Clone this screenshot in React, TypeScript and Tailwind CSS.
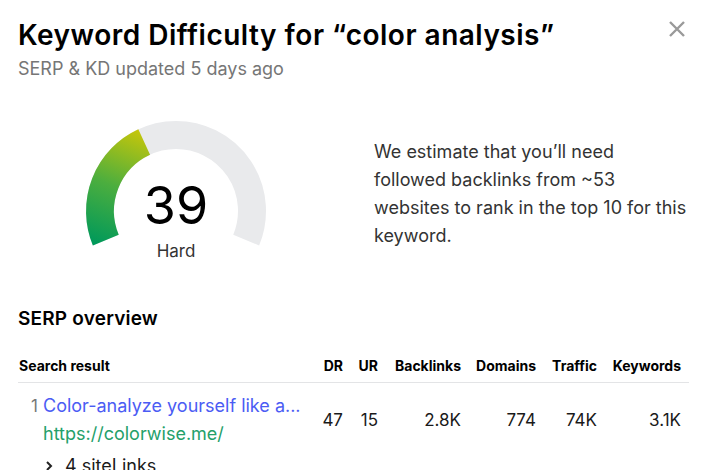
import React from "react";

function Gauge() {
  return (
    <div className="relative w-[200px] h-[145px]">
      <svg width="200" height="145" viewBox="0 0 200 145" className="absolute left-0 top-0">
        <defs>
          <linearGradient id="kdg" gradientUnits="userSpaceOnUse" x1="25" y1="135" x2="70" y2="22">
            <stop offset="0" stopColor="#00995a" />
            <stop offset="0.5" stopColor="#4cae3e" />
            <stop offset="1" stopColor="#c6c60a" />
          </linearGradient>
        </defs>
        <path d="M29.8 129.1 A76 76 0 1 1 170.2 129.1" fill="none" stroke="#e9eaec" strokeWidth="28" />
        <path d="M29.8 129.1 A76 76 0 0 1 68.2 31.0" fill="none" stroke="url(#kdg)" strokeWidth="28" />
      </svg>
      <div className="absolute left-0 right-0 top-[65px] text-center text-[52px] leading-[60px] text-black">
        39
      </div>
      <div className="absolute left-0 right-0 top-[128px] text-center text-[17px] leading-[24px] text-[#333]">
        Hard
      </div>
    </div>
  );
}

const headers = [
  { t: "DR", w: "w-[36px]" },
  { t: "UR", w: "w-[35px]" },
  { t: "Backlinks", w: "w-[83px]" },
  { t: "Domains", w: "w-[75px]" },
  { t: "Traffic", w: "w-[61px]" },
  { t: "Keywords", w: "w-[84px]" },
];
const vals = ["47", "15", "2.8K", "774", "74K", "3.1K"];

export default function App() {
  return (
    <div className="w-[725px] h-[470px] overflow-hidden bg-white text-[#1a1a1a]" style={{ fontFamily: "Inter, sans-serif" }}>
      <div className="pl-[18px] pr-[36px] pt-[16px]">
        <div className="flex items-start justify-between">
          <h1 className="text-[28px] leading-[38px] font-semibold tracking-[0.5px] text-black">
            Keyword Difficulty for “color analysis”
          </h1>
          <svg width="20" height="20" viewBox="0 0 20 20" className="mt-[3px] mr-[2px]">
            <path d="M3 3 L17 17 M17 3 L3 17" stroke="#9a9a9a" strokeWidth="2.4" />
          </svg>
        </div>
        <div className="mt-[3px] text-[18px] leading-[24px] text-[#767676]">
          SERP &amp; KD updated 5 days ago
        </div>
      </div>

      <div className="flex pt-[30px]">
        <div className="ml-[76px]">
          <Gauge />
        </div>
        <div className="ml-[98px] mt-[27px] whitespace-nowrap text-[18px] leading-[28px] text-[#333]">
          We estimate that you’ll need
          <br />
          followed backlinks from ~53
          <br />
          websites to rank in the top 10 for this
          <br />
          keyword.
        </div>
      </div>

      <div className="px-[18px] pt-[50px]">
        <div className="text-[19px] leading-[26px] font-semibold tracking-[0.2px] text-black">SERP overview</div>
        <div className="mt-[25px] w-[671px]">
          <div className="flex items-end border-b border-[#e3e4e6] pb-[7px] text-[14px] leading-[18px] font-bold text-black">
            <div className="flex-1 pl-[1px]">Search result</div>
            {headers.map((h) => (
              <div key={h.t} className={`${h.w} text-right`}>{h.t}</div>
            ))}
            <div className="w-[8px]" />
          </div>
          <div className="flex items-center pt-[9px]">
            <div className="flex-1 flex">
              <div className="w-[25px] text-right pr-[5px] text-[17px] leading-[28px] text-[#777]">1</div>
              <div>
                <div className="text-[18px] leading-[28px] text-[#4b5cf4]">Color-analyze yourself like a...</div>
                <div className="text-[18px] leading-[28px] text-[#24a06a]">https://colorwise.me/</div>
              </div>
            </div>
            {headers.map((h, i) => (
              <div key={h.t} className={`${h.w} text-right text-[17px] leading-[28px] text-[#1a1a1a]`}>{vals[i]}</div>
            ))}
            <div className="w-[8px]" />
          </div>
          <div className="flex items-center pl-[25px] pt-[4px] text-[18px] leading-[28px] text-[#1a1a1a]">
            <svg width="12" height="12" viewBox="0 0 12 12" className="mr-[10px]">
              <path d="M4 2 L8 6 L4 10" stroke="#222" strokeWidth="2" fill="none" />
            </svg>
            4 siteLinks
          </div>
        </div>
      </div>
    </div>
  );
}
